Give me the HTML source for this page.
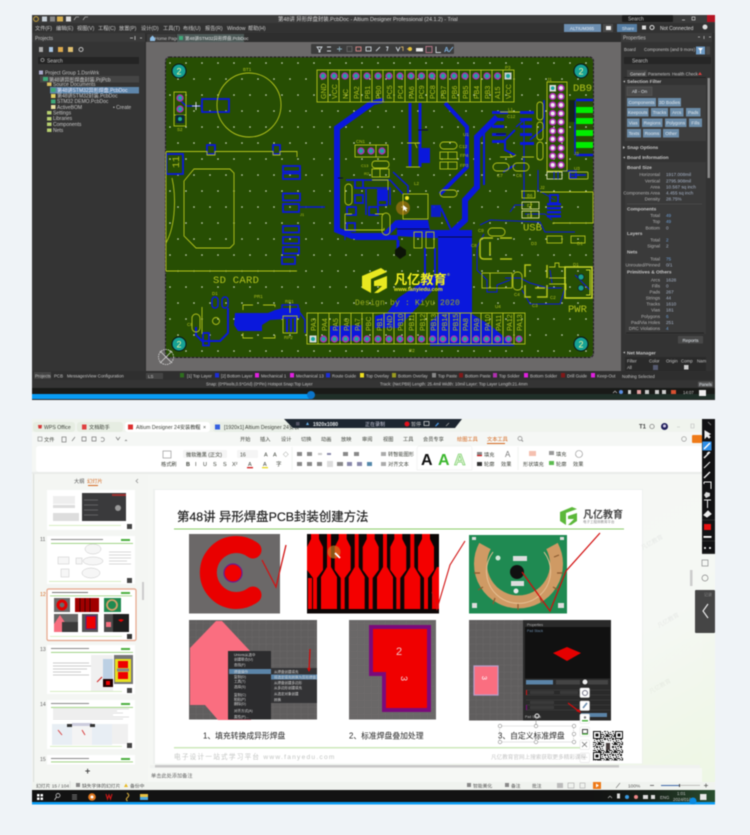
<!DOCTYPE html>
<html lang="zh"><head><meta charset="utf-8"><title>PCB</title>
<style>
html,body{margin:0;padding:0;background:#eff3f7;width:750px;height:835px;overflow:hidden}
svg{position:absolute;left:0;top:0;filter:blur(.45px)}
text{font-family:"Liberation Sans","Noto Sans CJK SC",sans-serif}
.w{fill:#c6c6c6;font-size:5px}
.m{fill:#d0d0d0;font-size:5.2px}
.r{fill:#b4b4b4;font-size:4.6px;text-anchor:end}
.v{fill:#a8b4c8;font-size:4.6px}
.h{fill:#c8c8c8;font-size:4.8px;font-weight:bold}
.b{fill:#e2e8ee;font-size:4.6px;text-anchor:middle}
.y{fill:#b4c31e;font-family:"Liberation Mono",monospace}
.d{fill:#3c4038;font-size:5.2px}
.c{fill:#222;font-size:8.2px}
.g{fill:#c2c4c2;font-size:6.6px;letter-spacing:1.25px}
.l{fill:#4a4a4a;font-size:5px}
</style></head><body>
<svg width="750" height="835" viewBox="0 0 750 835" xmlns="http://www.w3.org/2000/svg">
<defs>
<pattern id="dots" x="216" y="61" width="16" height="32" patternUnits="userSpaceOnUse">
<circle cx="2" cy="2" r=".8" fill="#d4dcc4"/><circle cx="10" cy="18" r=".8" fill="#d4dcc4"/>
</pattern>
<pattern id="grid" width="7" height="7" patternUnits="userSpaceOnUse"><path d="M7,0H0V7" fill="none" stroke="#757474" stroke-width=".4"/></pattern>
<pattern id="qr" width="8" height="8" patternUnits="userSpaceOnUse"><rect width="8" height="8" fill="#fff"/>
<path d="M0,0h2v1h-2zM3,0h1v2h-1zM5,0h3v1h-3zM1,2h2v1h-2zM4,2h2v2h-2zM7,2h1v2h-1zM0,4h1v2h-1zM2,4h1v1h-1zM1,6h3v1h-3zM5,5h1v1h-1zM6,6h2v2h-2zM0,7h1v1h-1zM4,7h1v1h-1z" fill="#111"/></pattern>
<g id="p"><circle r="3.6" fill="#b02fb8"/><circle r="2.2" fill="#19a89c"/></g>
<g id="ps"><circle r="3.6" fill="#b02fb8"/><circle r="2" fill="#eee"/></g>
<g id="g"><circle r="3.4" fill="#123"/><circle r="2.6" fill="#17a08f"/></g>
<g id="tp"><polygon points="-4,534 4,534 4,539 8,547 8,570 2,578 2,609 -2,609 -2,578 -8,570 -8,547 -4,539" fill="#f40000"/></g>
<g id="bp"><polygon points="-2,534 2,534 2,567 8,577 8,609 -8,609 -8,577 -2,567" fill="#f40000"/></g>
</defs>

<rect width="750" height="835" fill="#eff3f7"/>

<!-- ========= TOP WINDOW ========= -->
<rect x="32" y="15" width="683" height="385" fill="#2e2e2e"/>
<rect x="32" y="15" width="683" height="8" fill="#3b3b3b"/>
<circle cx="36" cy="19" r="2.4" fill="none" stroke="#c9a23a" stroke-width="1"/>
<rect x="42" y="16.5" width="5" height="5" fill="#c8d0d8"/><rect x="50" y="16.5" width="5" height="5" fill="#888"/>
<rect x="57" y="16.5" width="6" height="5" fill="#d8b050"/><rect x="66" y="16.5" width="5" height="5" fill="#ddd"/>
<path d="M74,20l2,-3h3M83,20l2,-3h3" stroke="#aaa" stroke-width=".8" fill="none"/>
<text x="278" y="21" class="w" style="font-size:5.4px;fill:#d4d4d4">第48讲 异形焊盘封装.PcbDoc - Altium Designer Professional (24.1.2) - Trial</text>
<rect x="622" y="15" width="51" height="7" fill="#1d1d1d" rx="1"/><text x="628" y="20.5" class="w">Search</text>
<path d="M682,20h3M692,17h3v3h-3z" stroke="#ccc" stroke-width=".7" fill="none"/>
<rect x="707" y="15" width="8" height="7" fill="#b51423"/>

<rect x="32" y="23" width="683" height="10" fill="#323232"/>
<g class="m">
<text x="35" y="30">文件(F)</text><text x="56" y="30">编辑(E)</text><text x="77" y="30">视图(V)</text><text x="98" y="30">工程(C)</text><text x="119" y="30">放置(P)</text><text x="141" y="30">设计(D)</text><text x="163" y="30">工具(T)</text><text x="183" y="30">布线(U)</text><text x="205" y="30">报告(R)</text><text x="227" y="30">Window</text><text x="248" y="30">帮助(H)</text>
</g>
<rect x="564" y="24" width="37" height="8" fill="#6d8fb2"/><text x="582" y="30" class="b" style="fill:#e6edf4">ALTIUM365</text>
<rect x="603" y="24" width="10" height="8" fill="#4a4a4a"/><rect x="606" y="26" width="5" height="4" fill="#eee"/>
<rect x="617" y="24" width="20" height="8" fill="#557da3"/><text x="628" y="30" class="b">Share</text>
<rect x="642" y="25.5" width="4" height="4" fill="#ddd"/><circle cx="652" cy="27.5" r="2" fill="none" stroke="#ddd"/>
<text x="660" y="30" class="w" style="fill:#ddd">Not Connected</text><circle cx="705" cy="27" r="2.5" fill="#ddd"/>

<!-- left panel -->
<rect x="32" y="33" width="113" height="340" fill="#343434"/>
<rect x="32" y="33" width="113" height="9" fill="#3a3a3a"/>
<text x="35" y="40" class="w">Projects</text>
<path d="M130,38h3M135,36v4M140,38h2" stroke="#ccc" stroke-width=".8"/>
<rect x="39" y="47" width="4" height="5" fill="#aaa"/><rect x="49" y="47" width="4" height="5" fill="#a8c4e0"/><rect x="58" y="47" width="5" height="5" fill="#dca94c"/><rect x="68" y="47" width="5" height="5" fill="#e0c070"/><circle cx="81" cy="49.5" r="2" fill="none" stroke="#bbb"/>
<rect x="38" y="57" width="101" height="7" fill="#242424"/>
<text x="47" y="62.5" class="w">Search</text><circle cx="42.5" cy="60" r="1.6" fill="none" stroke="#bbb" stroke-width=".6"/>
<rect x="40" y="76" width="99" height="6.5" fill="#454545"/>
<rect x="50" y="87" width="89" height="6.5" fill="#5e86ab"/>
<rect x="39" y="70.5" width="4" height="4" fill="#aac"/><text x="45" y="74.5" class="w">Project Group 1.DsnWrk</text>
<rect x="43" y="77" width="5" height="4" fill="#3fa878"/><text x="49" y="81.3" class="w">第48讲异形焊盘封装.PrjPcb</text>
<rect x="47" y="82.5" width="4.5" height="3.5" fill="#d8c060"/><text x="53" y="86" class="w">Source Documents</text>
<rect x="51" y="88" width="4.5" height="4" fill="#3fa878"/><text x="57" y="92" class="w" style="fill:#eef">第48讲STM32异形焊盘.PcbDoc</text>
<rect x="51" y="94" width="4.5" height="4" fill="#e0d060"/><text x="57" y="97.5" class="w">第48讲STM32封装.PcbDoc</text>
<rect x="51" y="99.5" width="4.5" height="4" fill="#3fa878"/><text x="57" y="103" class="w">STM32 DEMO.PcbDoc</text>
<rect x="51" y="105" width="4.5" height="4" fill="#e8e0a0"/><text x="57" y="109" class="w">ActiveBOM</text><text x="113" y="109" class="w">• Create</text>
<rect x="47" y="111" width="4.5" height="3.5" fill="#b8d070"/><text x="53" y="114.5" class="w">Settings</text>
<rect x="47" y="117" width="4.5" height="3.5" fill="#b8d070"/><text x="53" y="120" class="w">Libraries</text>
<rect x="47" y="122.5" width="4.5" height="3.5" fill="#b8d070"/><text x="53" y="126" class="w">Components</text>
<rect x="47" y="128.5" width="4.5" height="3.5" fill="#b8d070"/><text x="53" y="132" class="w">Nets</text>
<rect x="32" y="368" width="113" height="5" fill="#343434"/>

<!-- tabs -->
<rect x="145" y="33" width="476" height="9" fill="#2e2e2e"/>
<rect x="147" y="34" width="29" height="8" fill="#3b3b3b"/><path d="M150,38l2.5,-2.5l2.5,2.5v3h-5z" fill="#8fc0e8"/><text x="155" y="40" class="w" style="font-size:4.5px">Home Page</text>
<rect x="177" y="34" width="67" height="8" fill="#4d5a58"/><rect x="179" y="36" width="4" height="4" fill="#3fa878"/><text x="185" y="40" class="w" style="font-size:4.5px;fill:#e6e6e6">第48讲STM32异形焊盘.PcbDoc</text>

<!-- canvas -->
<rect x="146" y="42" width="475" height="330" fill="#6b6969"/>
<rect x="311" y="44" width="143" height="10" fill="#3c3c3c" rx="1"/>
<g fill="none" stroke="#cfd6dc" stroke-width=".9">
<path d="M317,47h5l-2,3v2h-1v-2zM327,47h4M327,51h4"/><path d="M337,49h5M339.5,46.500v5" stroke="#8ab"/><rect x="347" y="46.500" width="5" height="5" stroke="#666"/><rect x="356" y="47" width="5" height="4" stroke="#d88"/>
<rect x="366" y="47" width="5" height="4"/><path d="M376,51l4,-4M386,47h2l-1,4M396,47l2,4l2,-4"/><path d="M401,47h2v4M407,49h5" stroke="#ca6"/>
<circle cx="410" cy="49" r="2" fill="#e6c33a" stroke="none"/><rect x="416" y="48" width="7" height="3.500" fill="#e8e8e8" stroke="none"/><rect x="426" y="46.500" width="6" height="6" stroke="#b78"/><path d="M436,46.500v6h5"/>
</g>
<text x="444" y="52" style="font-size:7px;fill:#7fb2e0;font-weight:bold">A</text><path d="M449,52l4,-5" stroke="#7fb2e0"/>

<!-- ==== PCB ==== -->
<rect x="166" y="57.500" width="427" height="299.500" rx="4" fill="#274e03"/>
<rect x="166" y="57.500" width="427" height="299.500" fill="url(#dots)"/>
<rect x="165.500" y="57" width="428" height="300.500" rx="4" fill="none" stroke="#241c28" stroke-width="1" stroke-dasharray="3 1"/>

<!-- blue copper fills -->
<g fill="#0a18dc" stroke="none">
<polygon points="397,220 428,220 430,230 472,230 472,314 490,325 515,346 430,346 430,322 438,315 438,238 428,238 397,236"/>
<polygon points="423,275 435,275 435,288 412,313 398,328 375,328 375,316 387,313 398,298 422,282"/>
<polygon points="330,326 362,325 362,341 330,341"/>
<polygon points="235,313 268,313 275,310 283,308 300,308 300,318 270,320 262,325 262,331 238,331 234,325"/>
<rect x="355" y="235" width="43" height="5"/>
<rect x="378" y="190" width="10" height="11"/>
<rect x="431" y="205" width="10" height="12" opacity=".9"/>
<polygon points="420,148 430,148 430,163 420,163"/>
</g>
<g fill="none" stroke="#0a18dc">
<rect x="212" y="297" width="6" height="11" rx="3" stroke-width="1.500"/>
<rect x="222" y="297" width="6" height="11" rx="3" stroke-width="1.500"/>
<path d="M372,103L337,128V230L352,236H384L398,222" stroke-width="6"/>
<path d="M384,100L372,103" stroke-width="5"/>
<path d="M410,103V167M420,103V167" stroke-width="3"/>
<path d="M445,103L467,127V167L440,194" stroke-width="4"/>
<path d="M497,117L477,137V187L465,200L465,220L452,232" stroke-width="6"/>
<path d="M490,125L484,130V185" stroke-width="2"/>
<path d="M360,188H390V205M366,189V215M393,172L408,186V194" stroke-width="1.500"/>
<path d="M346,180H390L403,194" stroke-width="1.500"/>
<path d="M345,240V220" stroke-width="1.200"/>
<path d="M201,106H186L178,98" stroke-width="1.500"/>
<path d="M196,327V335L202,341L220,341L228,333V308" stroke-width="2"/>
<path d="M299,207H325" stroke-width="1.500"/>
<path d="M515,130L505,140V150L515,155M515,165L503,172" stroke-width="2"/>
<path d="M516,127L524,120V200" stroke-width="1.200"/>
<path d="M530,140L544,128V100" stroke-width="1.500"/>
<path d="M538,170V190L555,200" stroke-width="1"/>
<path d="M576,100H593M576,155H593" stroke-width="2.500"/>
<path d="M575,101V155" stroke-width="1.500"/>
<path d="M563,171H577M571,175H586" stroke-width="1.500"/>
<path d="M484,234L477,247V270L487,280V292H497V285L510,280" stroke-width="1"/>
<path d="M480,225L490,220L540,222L545,232L575,232" stroke-width="1"/>
<path d="M505,278H520L530,283L548,288L562,288" stroke-width="1"/>
<path d="M522,290L530,304H560L565,288" stroke-width="1"/>
<path d="M550,270L552,283M575,275L590,290" stroke-width="1"/>
<path d="M525,214H545L552,220" stroke-width="1"/>
<path d="M510,212L515,205H524" stroke-width="1"/>
<path d="M441,208L452,232" stroke-width="2"/>
<path d="M298,310L305,320V333" stroke-width="1.500"/>
<path d="M425,248V282M435,248V282" stroke-width="2"/>
<path d="M398,240V254" stroke-width="3"/>
</g>
<g fill="none" stroke="#0a18dc" stroke-width="1.800">
<rect x="202" y="99" width="27" height="13"/>
<rect x="166.500" y="154" width="16.500" height="20"/>
<rect x="283" y="166" width="17" height="5.500"/><rect x="283" y="173.500" width="17" height="5.500"/><rect x="283" y="193.500" width="17" height="7"/>
<rect x="283" y="204" width="16" height="8"/><rect x="283" y="226" width="16" height="6.500"/><rect x="283" y="237" width="16" height="6.500"/><rect x="283" y="247" width="16" height="6.500"/><rect x="282" y="257" width="13" height="7"/>
<rect x="207" y="145" width="8" height="9"/><rect x="273" y="145" width="7" height="9"/>
<rect x="203" y="333" width="6" height="12.500"/>
<rect x="355" y="180" width="8" height="8"/><rect x="355" y="195" width="8" height="8"/>
<rect x="347" y="207" width="9" height="8"/><rect x="369" y="207" width="9" height="8"/><rect x="347" y="223" width="8" height="8"/>
<rect x="378" y="190" width="9" height="8"/><rect x="378" y="197" width="9" height="8"/>
<rect x="550" y="195" width="8" height="8"/>
<rect x="570" y="172" width="6" height="6"/>
</g>
<g fill="#0a18dc">
<rect x="547" y="203" width="14" height="2.500"/><rect x="547" y="207" width="14" height="2.500"/><rect x="547" y="211" width="14" height="2.500"/><rect x="547" y="215" width="14" height="2.500"/>
<rect x="492" y="111" width="16" height="3"/><rect x="492" y="118" width="12" height="3"/><rect x="492" y="125" width="12" height="3"/><rect x="492" y="133" width="14" height="3"/><rect x="492" y="140" width="12" height="3"/>
<rect x="520" y="111" width="14" height="3"/><rect x="520" y="118" width="12" height="3"/><rect x="520" y="125" width="12" height="3"/><rect x="520" y="133" width="12" height="3"/><rect x="520" y="142" width="14" height="3"/>
</g>
<path d="M438,237H472M397,229H429M338,178H343M496,134H506M418,130H428" stroke="#0a0a40" stroke-width="1"/>
<polygon points="395,250 400,246 406,250 406,255 400,259 395,255" fill="#0d1408"/>

<!-- silk -->
<g fill="none" stroke="#b4c31c" stroke-width=".9">
<circle cx="249" cy="105" r="32"/>
<rect x="174" y="92" width="12" height="34"/><path d="M174,115H186"/>
<path d="M166,151.500H207V155H215V151.500H273V155H280V151.500H297V157"/>
<path d="M166,151.500V271H297"/>
<path d="M172,178C176,195 176,225 166,243"/>
<path d="M184,181L194,169H230L234,173V244L230,248H196L184,236Z"/>
<rect x="317" y="70" width="197" height="32"/>
<path d="M328,70V102M339,70V102M350,70V102M361,70V102M372,70V102M383,70V102M394,70V102M405,70V102M416,70V102M427,70V102M437,70V102M448,70V102M459,70V102M470,70V102M481,70V102M492,70V102M503,70V102"/>
<rect x="307" y="313" width="218" height="31"/>
<path d="M318,313V344M329,313V344M340,313V344M351,313V344M362,313V344M373,313V344M384,313V344M394,313V344M405,313V344M416,313V344M427,313V344M438,313V344M449,313V344M460,313V344M471,313V344M481,313V344M492,313V344M503,313V344M514,313V344"/>
<rect x="547" y="82" width="20" height="89"/>
<rect x="403" y="194" width="25" height="25"/>
<rect x="355" y="145" width="33" height="12"/><path d="M376,145V157"/>
<rect x="372" y="161" width="17" height="7" rx="3"/>
<rect x="372" y="169" width="17" height="8"/><path d="M380,169V177"/>
<rect x="345" y="184" width="7" height="21" rx="3.500"/>
<rect x="382" y="213" width="8" height="22" rx="4"/>
<path d="M345,214V230H384V228M345,214H352M375,214H384M372,180H388V190"/>
<path d="M407,143H420M406,167H420M415,143L417,148"/>
<rect x="440" y="142" width="17" height="7" rx="3.500"/>
<rect x="440" y="152" width="17" height="7"/><path d="M448,152V159"/>
<rect x="440" y="162" width="17" height="7"/><path d="M448,162V169"/>
<rect x="440" y="190" width="17" height="7" rx="3.500"/>
<rect x="414" y="232" width="8" height="16"/><rect x="426" y="232" width="8" height="16"/>
<rect x="537" y="102" width="6" height="18" rx="3"/><rect x="537" y="122" width="6" height="18" rx="3"/><rect x="537" y="142" width="6" height="18" rx="3"/>
<rect x="493" y="163" width="16" height="8" rx="4"/><rect x="513" y="163" width="16" height="8" rx="4"/>
<rect x="522" y="191" width="13" height="7"/>
<rect x="522" y="202" width="17" height="7"/><path d="M531,202V209"/>
<rect x="522" y="211" width="17" height="7"/><path d="M531,211V218"/>
<path d="M540,192H593V223H553V224"/>
<path d="M500,112H520"/>
<path d="M500,157H512M516,155L512,157L510,154M522,157H534"/>
<rect x="488" y="228" width="17" height="8" rx="4"/>
<path d="M493,238H484Q480,238 480,242V255Q480,259 484,259H492M500,238H512M500,259H512M490,242V255" stroke-width="1.500"/>
<rect x="482" y="273" width="30" height="15"/><path d="M490,273V288"/>
<rect x="513" y="272" width="9" height="18" rx="4"/>
<path d="M525,277V265H531M547,265V278M525,285V297H531M547,285V297H537M535,288H545" stroke-width="1.500"/>
<path d="M549,267H555V263H559V267H566M549,284H566V290M549,278H566"/>
<rect x="547" y="236" width="15" height="7"/><rect x="571" y="236" width="14" height="7"/>
<path d="M202,307V334"/>
<rect x="192" y="314" width="8" height="18" rx="4"/>
<circle cx="216" cy="321" r="3.500"/>
<path d="M253,305H243V310M253,338H243V333M263,305H275V307M263,338H275V335"/>
<rect x="283" y="316" width="14" height="17"/>
</g>
<rect x="282" y="305" width="16" height="8" fill="none" stroke="#0a18dc" stroke-width="1.500"/>
<path d="M290,305V313" stroke="#bccb1d"/>
<path d="M287,318V332M291,318V332M295,318V332" stroke="#0a18dc" stroke-width="2"/>
<rect x="565" y="267" width="27" height="31" fill="none" stroke="#c8d62a" stroke-width="1.500"/>
<path d="M586,270H590V295H586" fill="none" stroke="#c8d62a"/>
<rect x="522" y="202" width="17" height="7" fill="none" stroke="#c9d080"/><rect x="522" y="211" width="17" height="7" fill="none" stroke="#c9d080"/>
<rect x="547" y="172" width="15" height="7" fill="none" stroke="#c9d0a0"/><path d="M554,172V179M558,172V179" stroke="#0a18dc"/>
<rect x="569" y="172" width="19" height="7" rx="1" fill="none" stroke="#a8b830"/>
<!-- green fingers -->
<g fill="#00ee00"><rect x="576" y="107" width="17" height="6"/><rect x="576" y="118" width="17" height="6"/><rect x="576" y="130" width="17" height="6"/><rect x="576" y="142" width="17" height="6"/></g>
<rect x="569" y="100" width="6" height="22" fill="#0a0a20" opacity=".6"/>
<!-- pads -->
<circle cx="180" cy="98" r="3.800" fill="#3a6a18"/><use href="#p" x="180" y="98"/>
<use href="#p" x="180" y="109"/>
<rect x="176.500" y="115.500" width="7" height="7" fill="#07302a" stroke="#0c1a50"/><circle cx="180" cy="119" r="2" fill="#19a89c"/>
<use href="#p" x="323" y="76"/><use href="#p" x="334" y="76"/><use href="#p" x="345" y="76"/><use href="#p" x="356" y="76"/><use href="#p" x="367" y="76"/><use href="#p" x="378" y="76"/><use href="#p" x="389" y="76"/><use href="#p" x="400" y="76"/><use href="#p" x="411" y="76"/><use href="#p" x="421.500" y="76"/><use href="#p" x="432" y="76"/><use href="#p" x="443" y="76"/><use href="#p" x="454" y="76"/><use href="#p" x="465" y="76"/><use href="#p" x="476" y="76"/><use href="#p" x="487" y="76"/><use href="#p" x="497.500" y="76"/>
<rect x="504.500" y="72.500" width="7" height="7" fill="#c9ced0"/><circle cx="508" cy="76" r="2" fill="#19a89c"/>
<rect x="309.500" y="335.500" width="7" height="7" fill="#d8dcd8"/><circle cx="313" cy="339" r="2" fill="#19a89c"/>
<use href="#p" x="323.500" y="339"/><use href="#p" x="334.500" y="339"/><use href="#p" x="345.500" y="339"/><use href="#p" x="356.500" y="339"/><use href="#p" x="367" y="339"/><use href="#p" x="378" y="339"/><use href="#p" x="389" y="339"/><use href="#p" x="400" y="339"/><use href="#p" x="410.500" y="339"/><use href="#p" x="421.500" y="339"/><use href="#p" x="432.500" y="339"/><use href="#p" x="443" y="339"/><use href="#p" x="454" y="339"/><use href="#p" x="465" y="339"/><use href="#p" x="476" y="339"/><use href="#p" x="486.500" y="339"/><use href="#p" x="497.500" y="339"/><use href="#p" x="508.500" y="339"/><use href="#p" x="519" y="339"/>
<rect x="549.500" y="85" width="6.500" height="6.500" fill="#ddd"/><circle cx="552.700" cy="88.200" r="1.800" fill="#19a89c"/>
<use href="#ps" x="561" y="88"/>
<use href="#ps" x="552.700" y="96.500"/><use href="#ps" x="561" y="96.500"/><use href="#ps" x="552.700" y="105"/><use href="#ps" x="561" y="105"/><use href="#ps" x="552.700" y="113.500"/><use href="#ps" x="561" y="113.500"/><use href="#ps" x="552.700" y="122"/><use href="#ps" x="561" y="122"/><use href="#ps" x="552.700" y="131"/><use href="#ps" x="561" y="131"/><use href="#ps" x="552.700" y="139"/><use href="#ps" x="561" y="139"/><use href="#ps" x="552.700" y="148"/><use href="#ps" x="561" y="148"/><use href="#ps" x="552.700" y="156"/><use href="#ps" x="561" y="156"/><use href="#ps" x="552.700" y="165"/><use href="#ps" x="561" y="165"/>
<use href="#p" x="361" y="151"/><use href="#p" x="371" y="151"/><use href="#p" x="382" y="151"/>
<use href="#g" x="581" y="277"/><use href="#g" x="581" y="288"/>
<circle cx="407" cy="198" r="2" fill="#f0e020"/>
<circle cx="403" cy="208" r="7" fill="#c8801a" opacity=".55"/>
<path d="M403,205l0,6l1.500,-1.500l1.500,2l1,-.5l-1.200,-2l2,-.3z" fill="#fff"/>
<!-- corner markers -->
<g fill="#16a294" stroke="#09131a" stroke-width="1">
<circle cx="179" cy="71" r="7"/><circle cx="581" cy="71" r="7"/><circle cx="179" cy="344" r="7"/><circle cx="581" cy="344" r="7"/></g>
<g fill="#f2f2a0" text-anchor="middle" style="font-size:9px">
<text x="179" y="74.500">2</text><text x="581" y="74.500">2</text><text x="179" y="347.500">2</text><text x="581" y="347.500">2</text></g>
<!-- white cross -->
<path d="M192,106H200M196,102V110" stroke="#fff" stroke-width=".8"/>
<!-- silk text -->
<g class="y" style="font-size:4.500px">
<text x="243" y="71">BT1</text><text x="177" y="131">S2</text><text x="505" y="69">P3</text><text x="356" y="143">CN1</text><text x="361" y="167" style="font-size:4px">C13</text><text x="364" y="175" style="font-size:4px">R2</text>
<text x="463" y="136">U1</text><text x="547" y="81">J1</text><text x="414" y="185">L2</text>
<text x="508" y="111">L1</text><text x="507" y="118">C12</text><text x="459" y="148">C12</text><text x="460" y="157">FP4</text><text x="460" y="167">FP3</text>
<text x="497" y="177">C7</text><text x="516" y="177">C6</text><text x="527" y="197">B6</text><text x="540" y="189">J2</text><text x="527" y="207">E7</text><text x="527" y="217">E4</text>
<text x="574" y="155">J3</text><text x="574" y="170">U3</text>
<text x="531" y="245">D3</text><text x="577" y="245">D1</text><text x="471" y="247">C8</text><text x="478" y="232">C9</text><text x="514" y="296">C4</text><text x="550" y="299">C2</text><text x="532" y="307">C3</text><text x="495" y="308">U4</text>
<text x="573" y="266">D1</text>
<text x="254" y="298">PR1</text><text x="285" y="303">RP1</text><text x="284" y="339">RP2</text><text x="212" y="295">D1</text><text x="187" y="326">C8</text><text x="300" y="216" style="font-size:4px">J1</text>
<text x="409" y="352">R2</text>
</g>
<text x="213" y="283" class="y" style="font-size:10.500px;letter-spacing:.3px">SD CARD</text>
<text x="573" y="91" class="y" style="font-size:10.500px;letter-spacing:.1px">DB9</text>
<text x="523" y="230.500" class="y" style="font-size:10.500px">USB</text>
<text x="568" y="312" class="y" style="font-size:10.500px">PWR</text>
<text class="y" style="font-size:10px" transform="translate(179,168) rotate(-90)">11</text>
<text class="y" style="font-size:8px;fill:#9aad20;letter-spacing:.2px" x="355" y="305">Design by : Kiyu 2020</text>
<g class="y" style="font-size:7px">
<text transform="translate(326,99) rotate(-90)">GND</text><text transform="translate(337,99) rotate(-90)">VCC</text><text transform="translate(348,99) rotate(-90)">NC</text><text transform="translate(359,99) rotate(-90)">PA2</text><text transform="translate(370,99) rotate(-90)">PB1</text><text transform="translate(381,99) rotate(-90)">PB0</text><text transform="translate(392,99) rotate(-90)">PC5</text><text transform="translate(403,99) rotate(-90)">PC4</text><text transform="translate(414,99) rotate(-90)">PA6</text><text transform="translate(424,99) rotate(-90)">PC9</text><text transform="translate(435,99) rotate(-90)">PC8</text><text transform="translate(446,99) rotate(-90)">PB7</text><text transform="translate(457,99) rotate(-90)">PB6</text><text transform="translate(468,99) rotate(-90)">PB5</text><text transform="translate(479,99) rotate(-90)">PB4</text><text transform="translate(490,99) rotate(-90)">PB3</text><text transform="translate(500,99) rotate(-90)">A15</text><text transform="translate(511,99) rotate(-90)">VCC</text>
<text transform="translate(316,331) rotate(-90)">PA3</text><text transform="translate(327,331) rotate(-90)">PA4</text><text transform="translate(338,331) rotate(-90)">PA5</text><text transform="translate(349,331) rotate(-90)">PA6</text><text transform="translate(360,331) rotate(-90)">PA7</text><text transform="translate(371,331) rotate(-90)">PBC</text><text transform="translate(382,331) rotate(-90)">PB1</text><text transform="translate(392,331) rotate(-90)">GND</text><text transform="translate(403,331) rotate(-90)">PB10</text><text transform="translate(414,331) rotate(-90)">PB11</text><text transform="translate(425,331) rotate(-90)">PB12</text><text transform="translate(436,331) rotate(-90)">PB13</text><text transform="translate(447,331) rotate(-90)">PB14</text><text transform="translate(458,331) rotate(-90)">PB15</text><text transform="translate(468,331) rotate(-90)">PA8</text><text transform="translate(479,331) rotate(-90)">PA9</text><text transform="translate(490,331) rotate(-90)">PA10</text><text transform="translate(501,331) rotate(-90)">PA11</text><text transform="translate(512,331) rotate(-90)">PA12</text><text transform="translate(522,331) rotate(-90)">PA13</text>
</g>
<!-- logo on board -->
<polygon points="362,276 381,268 387,272 371,279 371,293 362,288" fill="#e8e820"/>
<polygon points="374,281 387,276 387,288 378,293 374,293 382,286 374,286" fill="#e8e820"/>
<text x="394" y="284" style="font-size:13.200px;font-weight:bold;fill:#f2f020">凡亿教育</text>
<text x="394" y="291" style="font-size:5.400px;font-weight:bold;fill:#e8e820">www.fanyiedu.com</text>
<text x="447" y="276" style="font-size:4px;fill:#e8e820">®</text>
<!-- origin marker -->
<circle cx="166" cy="357" r="7.500" fill="none" stroke="#d8d8d8" stroke-width=".8" stroke-dasharray="1.500 .8"/><path d="M160,363L172,351M160,351L172,363" stroke="#d8d8d8" stroke-width=".8"/>

<!-- layer tabs -->
<rect x="145" y="371" width="476" height="9" fill="#2f2f2f"/>
<rect x="32" y="371" width="113" height="9" fill="#2f2f2f"/>
<rect x="34" y="372" width="17" height="7" fill="#444"/>
<text x="35" y="377.500" class="w" style="font-size:4.400px">Projects</text><text x="54" y="377.500" class="w" style="font-size:4.400px">PCB</text><text x="67" y="377.500" class="w" style="font-size:4.400px">Messages</text><text x="87" y="377.500" class="w" style="font-size:4.400px">View Configuration</text>
<rect x="146" y="373" width="17" height="6" fill="#444"/><text x="148" y="378" class="w" style="font-size:4.400px">LS</text>
<g class="w" style="font-size:4.300px">
<rect x="180" y="373" width="4" height="4.500" fill="#2e6e1e"/><text x="187" y="377.500">[1] Top Layer</text>
<rect x="215" y="373" width="4" height="4.500" fill="#1b2cd8"/><text x="221" y="377.500">[2] Bottom Layer</text>
<rect x="255" y="373" width="4" height="4.500" fill="#e020e0"/><text x="261" y="377.500">Mechanical 1</text>
<rect x="290" y="373" width="4" height="4.500" fill="#e020e0"/><text x="296" y="377.500">Mechanical 13</text>
<rect x="326" y="373" width="4" height="4.500" fill="#1b2cd8"/><text x="332" y="377.500">Route Guide</text>
<rect x="360" y="373" width="4" height="4.500" fill="#f0e020"/><text x="366" y="377.500">Top Overlay</text>
<rect x="392" y="373" width="4" height="4.500" fill="#9a9a20"/><text x="398" y="377.500">Bottom Overlay</text>
<rect x="432" y="373" width="4" height="4.500" fill="#888"/><text x="438" y="377.500">Top Paste</text>
<rect x="459" y="373" width="4" height="4.500" fill="#801818"/><text x="465" y="377.500">Bottom Paste</text>
<rect x="493" y="373" width="4" height="4.500" fill="#b030b0"/><text x="499" y="377.500">Top Solder</text>
<rect x="524" y="373" width="4" height="4.500" fill="#e020e0"/><text x="530" y="377.500">Bottom Solder</text>
<rect x="561" y="373" width="4" height="4.500" fill="#801818"/><text x="567" y="377.500">Drill Guide</text>
<rect x="591" y="373" width="4" height="4.500" fill="#e020e0"/><text x="597" y="377.500">Keep-Out</text>
</g>
<!-- status -->
<rect x="32" y="380" width="683" height="8" fill="#343434"/>
<text x="206" y="385.500" class="w" style="font-size:4.200px">Snap: (0*Pixels,0.5*Grid) (0*Pin) Hotspot Snap:Top Layer</text>
<text x="380" y="385.500" class="w" style="font-size:4.200px">Track: (Net:PB9) Length: 25.4mil Width: 10mil  Layer: Top Layer  Length:21.4mm</text>
<rect x="698" y="381.500" width="15" height="5.500" fill="#555" rx="1"/><text x="705.500" y="386" class="b" style="font-size:4.200px">Panels</text>
<!-- taskbar -->
<rect x="32" y="388" width="683" height="6" fill="#191a18"/>
<rect x="32" y="394" width="280" height="5" fill="#089cf5"/>
<rect x="312" y="394" width="403" height="5" fill="#1f2f28"/>
<circle cx="311" cy="395" r="4" fill="#0b74c9"/>
<g fill="#ccc"><path d="M613,393l2,-2l2,2" fill="none" stroke="#ccc" stroke-width=".6"/><circle cx="621" cy="392" r="2" fill="#5a8ee0"/><rect x="628" y="390" width="3" height="4"/><rect x="637" y="390" width="4" height="4" fill="#e4a0a0"/><rect x="645" y="390" width="4" height="4"/><rect x="655" y="390" width="4" height="4"/><rect x="662" y="390" width="4" height="4"/><rect x="671" y="390" width="5" height="4" fill="#d85030"/><rect x="699" y="390" width="7" height="6" fill="#eee"/></g>
<text x="683" y="394" class="w" style="font-size:4.300px">14:07</text>

<!-- right panel -->
<rect x="621" y="33" width="91" height="338" fill="#333"/>
<rect x="621" y="33" width="91" height="9" fill="#3b3b3b"/>
<text x="623" y="39.500" class="w">Properties</text><path d="M698,37h2M704,36v3M709,37h2" stroke="#ccc" stroke-width=".7"/>
<text x="624" y="51" class="w" style="font-size:4.400px">Board</text><text x="644" y="51" class="w" style="font-size:4.400px">Components (and 9 more)</text>
<rect x="696" y="46.500" width="9" height="8" fill="#6d9ac4"/><path d="M698,48h5l-2,2.500v3h-1v-3z" fill="#fff"/><rect x="706" y="46.500" width="4" height="8" fill="#484848"/>
<rect x="624" y="57" width="87" height="7" fill="#262626"/><text x="632" y="62.500" class="w">Search</text>
<rect x="627" y="70" width="20" height="7" fill="#444"/>
<text x="630" y="75.500" class="w" style="fill:#e0e0e0;font-size:4.300px">General</text><text x="648" y="75.500" class="w" style="font-size:4.300px">Parameters</text><text x="672" y="75.500" class="w" style="font-size:4.300px">Health Check</text><path d="M698,75l2,-3l2,3z" fill="#d84040"/>
<path d="M624,77.500H706" stroke="#222"/>
<text x="627" y="83" class="h">Selection Filter</text><path d="M623,81.500l2,-1v2z" fill="#ccc"/>
<rect x="625" y="85" width="81" height="56" fill="#3d3d3d"/>
<rect x="627" y="87" width="25" height="8.500" fill="#4a4a4a" stroke="#666" stroke-width=".4"/><text x="639.500" y="93" class="b">All - On</text>
<g fill="#6c8ca8">
<rect x="627" y="98" width="29" height="8.500"/><rect x="658" y="98" width="23" height="8.500"/>
<rect x="627" y="108" width="21.500" height="8.500"/><rect x="651" y="108" width="17" height="8.500"/><rect x="670" y="108" width="13.500" height="8.500"/><rect x="686" y="108" width="14.500" height="8.500"/>
<rect x="627" y="118.500" width="12.500" height="8.500"/><rect x="642" y="118.500" width="20.500" height="8.500"/><rect x="665" y="118.500" width="21.500" height="8.500"/><rect x="689" y="118.500" width="13" height="8.500"/>
<rect x="627" y="129" width="14" height="8.500"/><rect x="643" y="129" width="18" height="8.500"/><rect x="663" y="129" width="16" height="8.500"/>
</g>
<text x="641.500" y="104" class="b">Components</text><text x="669.500" y="104" class="b">3D Bodies</text>
<text x="637.700" y="114" class="b">Keepouts</text><text x="659.500" y="114" class="b">Tracks</text><text x="676.700" y="114" class="b">Arcs</text><text x="693.200" y="114" class="b">Pads</text>
<text x="633.200" y="124.700" class="b">Vias</text><text x="652.200" y="124.700" class="b">Regions</text><text x="675.700" y="124.700" class="b">Polygons</text><text x="695.500" y="124.700" class="b">Fills</text>
<text x="634" y="135" class="b">Texts</text><text x="652" y="135" class="b">Rooms</text><text x="671" y="135" class="b">Other</text>
<text x="627" y="149" class="h">Snap Options</text><path d="M623,146l2,1.500l-2,1.500z" fill="#ccc"/>
<text x="627" y="159" class="h">Board Information</text><path d="M623,157.500l2,-1v2z" fill="#ccc"/>
<rect x="625" y="162" width="81" height="172" fill="#3a3a3a"/>
<text x="627" y="169" class="h">Board Size</text>
<text x="660" y="176" class="r">Horizontal</text><text x="666" y="176" class="v">1917.008mil</text>
<text x="660" y="182.500" class="r">Vertical</text><text x="666" y="182.500" class="v">2795.908mil</text>
<text x="660" y="188.500" class="r">Area</text><text x="666" y="188.500" class="v">10.567 sq inch</text>
<text x="660" y="194.500" class="r">Components Area</text><text x="666" y="194.500" class="v">4.455 sq inch</text>
<text x="660" y="200.500" class="r">Density</text><text x="666" y="200.500" class="v">28.75%</text>
<path d="M627,204H702" stroke="#555" stroke-width=".5"/>
<text x="627" y="210.500" class="h">Components</text>
<text x="660" y="217" class="r">Total</text><text x="666" y="217" class="v" style="fill:#6ea0d8">49</text>
<text x="660" y="223" class="r">Top</text><text x="666" y="223" class="v" style="fill:#6ea0d8">49</text>
<text x="660" y="229.500" class="r">Bottom</text><text x="666" y="229.500" class="v">0</text>
<text x="627" y="235" class="h">Layers</text>
<text x="660" y="241.500" class="r">Total</text><text x="666" y="241.500" class="v" style="fill:#6ea0d8">2</text>
<text x="660" y="247.500" class="r">Signal</text><text x="666" y="247.500" class="v">2</text>
<text x="627" y="253.500" class="h">Nets</text>
<text x="660" y="260.500" class="r">Total</text><text x="666" y="260.500" class="v" style="fill:#6ea0d8">75</text>
<text x="660" y="266.500" class="r">Unrouted/Pinned</text><text x="666" y="266.500" class="v">0/1</text>
<text x="627" y="273.500" class="h">Primitives &amp; Others</text>
<text x="660" y="281.500" class="r">Arcs</text><text x="666" y="281.500" class="v">1628</text>
<text x="660" y="287.500" class="r">Fills</text><text x="666" y="287.500" class="v">0</text>
<text x="660" y="293.500" class="r">Pads</text><text x="666" y="293.500" class="v">267</text>
<text x="660" y="299.500" class="r">Strings</text><text x="666" y="299.500" class="v">44</text>
<text x="660" y="305.500" class="r">Tracks</text><text x="666" y="305.500" class="v">1610</text>
<text x="660" y="311.500" class="r">Vias</text><text x="666" y="311.500" class="v">181</text>
<text x="660" y="318" class="r">Polygons</text><text x="666" y="318" class="v" style="fill:#6ea0d8">6</text>
<text x="660" y="324" class="r">Pad/Via Holes</text><text x="666" y="324" class="v">251</text>
<text x="660" y="330" class="r">DRC Violations</text><text x="666" y="330" class="v" style="fill:#6ea0d8">4</text>
<path d="M626,333H704" stroke="#222"/>
<rect x="678" y="336" width="25" height="7.500" fill="#484848"/><text x="690.500" y="342" class="b">Reports</text>
<text x="627" y="354.500" class="h">Net Manager</text><path d="M623,352.500l2,-1v2z" fill="#ccc"/>
<rect x="625" y="357" width="81" height="14" fill="#2a2a2a"/>
<text x="627" y="362.500" class="w" style="font-size:4.400px">Filter</text><text x="649" y="362.500" class="w" style="font-size:4.400px">Color</text><text x="666" y="362.500" class="w" style="font-size:4.400px">Origin</text><text x="681" y="362.500" class="w" style="font-size:4.400px">Comp</text><text x="697" y="362.500" class="w" style="font-size:4.400px">Nam</text>
<text x="627" y="369" class="w" style="font-size:4.400px">All</text><rect x="653" y="365" width="5" height="5" fill="#555a70"/><rect x="684" y="365" width="4.500" height="4.500" fill="#ccc"/>
<rect x="707.500" y="78" width="2.500" height="100" fill="#8a8a8a"/>
<text x="622" y="378" class="w" style="font-size:4.300px">Nothing Selected</text>

<!-- ========= BOTTOM WINDOW ========= -->
<defs><linearGradient id="gr" x1="0" y1="0" x2="1" y2="1"><stop offset="0" stop-color="#f5f7f4"/><stop offset=".7" stop-color="#f5f8f4"/><stop offset="1" stop-color="#eef7e4"/></linearGradient></defs>
<rect x="32" y="419" width="683" height="371" fill="url(#gr)"/>
<rect x="32" y="419" width="683" height="13" fill="#f0f4ee"/>
<rect x="33" y="422" width="42" height="10" rx="3" fill="#e6ede2"/><rect x="77" y="422" width="46" height="10" rx="3" fill="#e6ede2"/><rect x="125" y="422" width="85" height="10" rx="3" fill="#fff"/><rect x="213" y="422" width="80" height="10" rx="3" fill="#e8eee6"/>
<path d="M38,425h4l-.5,3.500h-3z" fill="#d43a3a"/><text x="44" y="429" class="d">WPS Office</text>
<rect x="82" y="424.500" width="4.500" height="5" fill="#e04040"/><text x="89" y="429" class="d">文档助手</text>
<rect x="128" y="424.500" width="5" height="5" fill="#dd3030"/><text x="136" y="429" class="d">Altium Designer 24安装教程</text><circle cx="197" cy="427" r="1.600" fill="none" stroke="#888" stroke-width=".5"/><text x="203" y="429" class="d">×</text>
<rect x="215" y="424.500" width="5" height="5" fill="#3560e0"/><text x="224" y="429" class="d">[1920x1] Altium Designer 24安装</text>
<!-- record bar -->
<polygon points="284,419 462,419 455,428 293,428" fill="#1d2630"/>
<rect x="296" y="422" width="3.500" height="3.500" fill="#556"/><path d="M306,425l1.500,-3l1.500,3z" fill="#6ab0e8"/><text x="313" y="426" class="w" style="font-size:5px;fill:#e4e8ea;font-weight:bold">1920x1080</text><text x="365" y="426" class="w" style="fill:#ccd">正在录制</text>
<circle cx="407" cy="424" r="2.500" fill="#e0101c"/><text x="411" y="426" class="w">暂停</text>
<rect x="424" y="421.500" width="5" height="4" fill="none" stroke="#ddd" stroke-width=".7"/><path d="M435,426l3,-3.500l1,1l-3,3z" fill="#4a9ae8"/><path d="M446,426l3,-3" stroke="#aaa" stroke-width=".7"/>
<!-- top right icons -->
<text x="639" y="428.500" style="font-size:6px;fill:#444;font-weight:bold">T1</text><circle cx="652" cy="426.500" r="2.200" fill="none" stroke="#777" stroke-width=".7"/><circle cx="664.500" cy="426.500" r="3.500" fill="#20205a"/><circle cx="664.500" cy="426" r="1.500" fill="#d0c8e8"/>
<path d="M677,427h3M691,424h3v4h-3z" stroke="#bbb" stroke-width=".6" fill="none"/>

<rect x="32" y="432" width="683" height="14" fill="#f5f7f5"/>
<rect x="38" y="437" width="4" height="4" fill="none" stroke="#666" stroke-width=".5"/><text x="44" y="441.500" class="d">文件</text>
<g fill="none" stroke="#777" stroke-width=".7"><rect x="62" y="437" width="4" height="5"/><path d="M72,441l3,-4M82,437h4v4h-4zM92,437h4v4h-4zM101,438a2,2 0 1 1 0,3M116,437l2,3l2,-3M125,441l1,-1l1,1"/></g>
<g class="d">
<text x="240" y="441">开始</text><text x="260" y="441">插入</text><text x="281" y="441">设计</text><text x="301" y="441">切换</text><text x="321" y="441">动画</text><text x="341" y="441">放映</text><text x="362" y="441">审阅</text><text x="383" y="441">视图</text><text x="403" y="441">工具</text><text x="423" y="441">会员专享</text>
<text x="457" y="441" style="fill:#d4661c">绘图工具</text><text x="487" y="441" style="fill:#d4661c">文本工具</text></g>
<rect x="487" y="443" width="18" height="1" fill="#d4661c"/>
<circle cx="520" cy="438.500" r="2" fill="none" stroke="#888" stroke-width=".7"/><path d="M521.500,440l1.500,1.500" stroke="#888"/>
<circle cx="684" cy="439" r="2.300" fill="none" stroke="#888" stroke-width=".6"/>
<rect x="692" y="435" width="10" height="8" rx="1" fill="#ee7a18"/>

<!-- ribbon -->
<rect x="36" y="446" width="666" height="26" rx="3" fill="#fff"/>
<rect x="32" y="472" width="670" height="2" fill="#e9ebe9"/>
<rect x="163" y="451" width="8" height="7" fill="none" stroke="#888" stroke-width=".6"/><text x="161" y="466" class="d">格式刷</text>
<rect x="183" y="450" width="44" height="8" fill="#f5f5f5" rx="1"/><text x="186" y="456.500" class="d">微软雅黑 (正文)</text>
<rect x="237" y="450" width="21" height="8" fill="#f5f5f5" rx="1"/><text x="240" y="456.500" class="d">16</text>
<g class="d" style="font-size:5.500px"><text x="264" y="456.500">A</text><text x="273" y="456.500">A</text><text x="283" y="456.500">◇</text>
<text x="186" y="466" style="font-weight:bold">B</text><text x="195" y="466">I</text><text x="203" y="466">U</text><text x="213" y="466">S</text><text x="223" y="466">S</text><text x="232" y="466">X²</text><text x="248" y="466">A</text><text x="263" y="466">A</text><text x="276" y="466">字</text></g>
<rect x="247" y="467" width="6" height="1.300" fill="#d01818"/><rect x="262" y="467" width="6" height="1.300" fill="#e8d820"/>
<path d="M292,447V470M518,447V470" stroke="#e4e6e4" stroke-width=".5"/>
<g fill="#888">
<rect x="297" y="452" width="5" height="4"/><rect x="307" y="452" width="5" height="4"/><rect x="318" y="453" width="4" height="2" fill="#ccc"/><rect x="327" y="453" width="4" height="2" fill="#88a"/><rect x="343" y="452" width="5" height="4"/><rect x="354" y="452" width="5" height="4"/><rect x="297" y="462" width="5" height="4"/><rect x="307" y="462" width="5" height="4"/><rect x="317" y="462" width="5" height="4"/><rect x="327" y="461" width="6" height="6" fill="#ddd"/><rect x="337" y="462" width="6" height="4"/><rect x="347" y="462" width="5" height="4" fill="#88a"/><rect x="357" y="462" width="5" height="4" fill="#88a"/><rect x="367" y="462" width="5" height="4" fill="#58a"/></g>
<rect x="381" y="452" width="5" height="4" fill="#aaa"/><text x="388" y="456" class="d">转智能图形</text>
<rect x="381" y="462" width="5" height="4" fill="#aaa"/><text x="388" y="466" class="d">对齐文本</text>
<path d="M417,449Q417,446 420,446H470Q472,446 472,449V470H417z" fill="#fff" stroke="#e8eae8" stroke-width=".5"/>
<text x="421" y="465" style="font-size:16px;font-weight:bold;fill:#111">A</text>
<text x="438" y="465" style="font-size:16px;font-weight:bold;fill:#3cb72e">A</text>
<text x="454" y="465" style="font-size:16px;font-weight:bold;fill:#d9f0cc;stroke:#5cc54e;stroke-width:.5">A</text>
<rect x="477" y="452" width="5" height="3" fill="#888"/><rect x="477" y="455" width="5" height="1.200" fill="#d01818"/><text x="484" y="456.500" class="d">填充</text>
<rect x="477" y="462" width="5" height="4" fill="#333"/><text x="484" y="466" class="d">轮廓</text>
<text x="505" y="457" style="font-size:8px;fill:#777">A</text><text x="501" y="466" class="d">效果</text>
<rect x="529" y="451" width="7" height="5" fill="#f5c0b0"/><text x="523" y="466" class="d">形状填充</text>
<rect x="549" y="451" width="5" height="4" fill="#999"/><text x="556" y="456" class="d">填充</text>
<rect x="549" y="461" width="5" height="4" fill="#5cbb50"/><text x="556" y="466" class="d">轮廓</text>
<circle cx="579" cy="454" r="3.500" fill="none" stroke="#888" stroke-width=".6"/><text x="573" y="466" class="d">效果</text>

<!-- left slide panel -->
<rect x="32" y="474" width="116" height="308" fill="#f4f6f3"/>
<rect x="33" y="474" width="1.200" height="308" fill="#dde0dc"/>
<text x="74" y="483" class="d" style="fill:#555">大纲</text><text x="87" y="483" class="d" style="fill:#d4661c">幻灯片</text>
<rect x="88" y="485" width="10" height="1" fill="#d4661c"/>
<path d="M138,479l-2,2l2,2" fill="none" stroke="#888" stroke-width=".7"/>
<!-- thumbs -->
<rect x="47" y="490" width="88" height="40" fill="#fff"/>
<rect x="82" y="493" width="44" height="28" fill="#3a3a3c"/><path d="M112,494h14v2h-14z" fill="#a03030"/><path d="M84,500h14M84,505h14M84,510h14M84,515h14" stroke="#888" stroke-width=".6"/>
<circle cx="118" cy="508" r="3" fill="#999"/><rect x="53" y="496" width="22" height="8" fill="#eee"/><rect x="53" y="505" width="22" height="3" fill="#ddd"/><rect x="53" y="513" width="26" height="8" fill="#ddd"/><rect x="49" y="525" width="72" height=".8" fill="#cdeab5"/><rect x="127" y="524" width="5" height="5" fill="#444"/>
<text x="40" y="541" class="d" style="fill:#666">11</text>
<rect x="47" y="536" width="88" height="48" fill="#fff"/>
<rect x="51" y="539" width="52" height="1" fill="#888"/><rect x="121" y="539" width="9" height="2" fill="#4cb040"/><rect x="51" y="543" width="82" height=".8" fill="#8ccb6a"/>
<g fill="#f6f6f6" stroke="#bbb" stroke-width=".4"><ellipse cx="93" cy="549" rx="8" ry="5"/><ellipse cx="93" cy="561" rx="10" ry="4"/><rect x="58" y="557" width="11" height="7"/><rect x="76" y="558" width="6" height="6"/><rect x="61" y="569" width="8" height="8"/><ellipse cx="91" cy="573" rx="9" ry="5"/></g>
<path d="M109,552h22M109,555h22M109,558h22M109,561h18M109,564h22" stroke="#ccc" stroke-width=".7"/><rect x="127" y="578" width="5" height="5" fill="#444"/><rect x="49" y="581" width="72" height=".8" fill="#cdeab5"/>
<text x="40" y="596" class="d" style="fill:#d4661c">12</text>
<rect x="47" y="589" width="89" height="51.500" fill="#fff" stroke="#e6a58a" stroke-width="1.200" rx="1.500"/>
<rect x="52" y="592" width="36" height="1" fill="#777"/><rect x="121" y="592" width="9" height="2" fill="#4cb040"/><rect x="50" y="595.500" width="82" height=".7" fill="#8ccb6a"/>
<rect x="54" y="598" width="16" height="14" fill="#6b6868"/><circle cx="62" cy="605" r="4" fill="none" stroke="#e30000" stroke-width="3"/>
<rect x="75" y="598" width="24" height="14" fill="#a00000"/><path d="M80,598v14M85,598v14M90,598v14" stroke="#200" stroke-width=".7"/>
<rect x="104" y="598" width="17" height="14" fill="#1f8a50"/><circle cx="112" cy="605" r="5" fill="none" stroke="#d4a06a" stroke-width="1.800"/>
<rect x="54" y="614" width="24" height="18" fill="#666"/><polygon points="54,624 60,615 66,624 66,632 54,632" fill="#f76f80"/><rect x="62" y="622" width="16" height="10" fill="#3a3a3a"/>
<rect x="82" y="614" width="16" height="18" fill="#555"/><rect x="86" y="616" width="10" height="13" fill="#e00" stroke="#60207a"/>
<rect x="104" y="614" width="25" height="18" fill="#4a4a4a"/><rect x="113" y="614" width="16" height="18" fill="#1e1e1e"/><path d="M118,620l3,-1l3,1l-3,2z" fill="#e00"/><rect x="106" y="622" width="5" height="5" fill="#f76f80"/>
<rect x="127" y="634" width="5" height="5" fill="#333"/>
<rect x="50" y="636" width="72" height=".7" fill="#cdeab5"/>
<text x="40" y="651" class="d" style="fill:#666">13</text>
<rect x="47" y="645" width="88" height="49" fill="#fff"/><rect x="51" y="648" width="38" height="1" fill="#888"/><rect x="121" y="648" width="9" height="2" fill="#4cb040"/><rect x="51" y="652" width="82" height=".8" fill="#8ccb6a"/>
<path d="M53,663h36M53,666h38M53,669h34M53,672h28M53,675h36" stroke="#bbb" stroke-width=".7"/>
<rect x="91" y="655" width="22" height="36" fill="#f0f0f0"/><rect x="103" y="659" width="10" height="20" fill="#bcd0e4"/>
<rect x="114" y="655" width="19" height="29" fill="#777"/><rect x="115" y="659" width="16" height="23" fill="#e6e020"/><rect x="118" y="661" width="10" height="7" fill="#e00"/><rect x="118" y="672" width="10" height="7" fill="#e00"/><rect x="117" y="668.500" width="12" height="3" fill="#888"/>
<rect x="103" y="679" width="10" height="8" fill="#200"/><rect x="106" y="681" width="4" height="4" fill="#e00"/><path d="M97,682l5,-5" stroke="#d02020"/>
<rect x="127" y="688" width="5" height="5" fill="#444"/><rect x="50" y="691" width="72" height=".8" fill="#cdeab5"/>
<text x="40" y="706" class="d" style="fill:#666">14</text>
<rect x="47" y="700" width="88" height="49" fill="#fff"/><rect x="51" y="703" width="38" height="1" fill="#888"/><rect x="121" y="703" width="9" height="2" fill="#4cb040"/><rect x="51" y="707" width="82" height=".8" fill="#8ccb6a"/>
<path d="M53,709h76M53,711h64M53,713h70M53,715h60M53,717h76M53,719h70" stroke="#bbb" stroke-width=".6"/>
<rect x="52" y="724" width="20" height="21" fill="#e8eef4"/><rect x="72" y="724" width="20" height="21" fill="#f4f4f4"/><rect x="72" y="723" width="20" height="3" fill="#ccd"/><rect x="92" y="724" width="20" height="21" fill="#e8eef4"/><rect x="112" y="724" width="16" height="20" fill="#f0f0f0"/><rect x="67" y="724" width="5" height="3" fill="#333"/><rect x="90" y="724" width="5" height="3" fill="#333"/>
<path d="M58,730l4,5M82,730l3,5" stroke="#d84040"/>
<rect x="127" y="743" width="5" height="5" fill="#444"/><rect x="50" y="746" width="72" height=".8" fill="#cdeab5"/>
<text x="40" y="761" class="d" style="fill:#666">15</text>
<rect x="47" y="755" width="88" height="9.500" fill="#fff"/><rect x="51" y="758" width="38" height="1" fill="#888"/><rect x="121" y="758" width="9" height="2" fill="#4cb040"/><rect x="51" y="761.500" width="82" height=".8" fill="#8ccb6a"/>
<text x="85" y="774" style="font-size:9px;fill:#444;font-weight:bold">+</text>
<rect x="142" y="582" width="2" height="18" fill="#ccc"/>

<!-- work area -->
<rect x="148" y="474" width="554" height="308" fill="url(#gr)"/>
<rect x="153" y="489" width="490" height="275" fill="#eaeceb" opacity=".6"/>
<rect x="155" y="490" width="487" height="273.500" fill="#fff"/>
<text x="177" y="521" style="font-size:12.400px;fill:#1d1d1d;stroke:#1d1d1d;stroke-width:.2px">第48讲 异形焊盘PCB封装创建方法</text>
<rect x="174" y="528.500" width="450" height="1" fill="#8ccb6a"/>
<polygon points="560,512 572,507 577,509 566,513 566,525 560,521" fill="#5cb83a"/><polygon points="568,516 577,513 577,521 571,525 568,525 574,519 568,519" fill="#5cb83a"/>
<text x="583" y="518" style="font-size:10px;font-weight:bold;fill:#444">凡亿教育</text>
<text x="583" y="523" style="font-size:3.500px;fill:#888">电子工程师教育平台</text>

<!-- image 1 -->
<rect x="189" y="534" width="91" height="79.500" fill="#6b6868"/>
<path d="M253,550A28,28 0 1 0 253,595" fill="none" stroke="#e90000" stroke-width="17" stroke-linecap="round"/>
<circle cx="233" cy="573" r="9" fill="#f00000" stroke="#6b1a90" stroke-width="1.200"/>
<path d="M262,560L276,587L286,545" fill="none" stroke="#d21414" stroke-width="1.300"/>
<!-- image 2 -->
<rect x="307" y="534" width="132" height="79.500" fill="#0c0606"/>
<use href="#tp" x="315"/><use href="#tp" x="342.700"/><use href="#tp" x="370.700"/><use href="#tp" x="398.300"/><use href="#tp" x="426"/>
<use href="#bp" x="329"/><use href="#bp" x="356.700"/><use href="#bp" x="385"/><use href="#bp" x="412.300"/>
<polygon points="432,577 437,567 439,567 439,609 432,609" fill="#f40000"/>
<rect x="308" y="578" width="4" height="31" fill="#f40000"/>
<circle cx="334" cy="552" r="6.500" fill="#c88222" opacity=".65"/><path d="M335,553l5,5" stroke="#fff" stroke-width="1.800"/>
<path d="M432,592L437,609L450,565L465,541" fill="none" stroke="#d21414" stroke-width="1.100"/>
<!-- image 3 -->
<rect x="469" y="535" width="98" height="78.500" fill="#1f8a52"/>
<path d="M485,546A38,38 0 1 0 552,546" fill="none" stroke="#cf9a64" stroke-width="13"/>
<path d="M493,552A32,32 0 1 0 544,552" fill="none" stroke="#e6c094" stroke-width="1"/>
<path d="M474,573h6M478,590l5,-3M493,604l2,-6M518,610v-6M542,604l-2,-6M558,590l-5,-3M563,573h-6M559,555l-5,2" stroke="#8a5a30" stroke-width="1.200"/>
<rect x="513" y="556" width="14" height="5" fill="#ddd"/><rect x="511" y="581" width="13" height="5" fill="#ddd"/>
<circle cx="517" cy="572" r="7" fill="#111"/><circle cx="516" cy="591" r="2.500" fill="#e8e8e8"/><circle cx="498" cy="558" r="2.500" fill="#d0e8d8"/>
<rect x="472" y="537" width="4" height="3" fill="#ddd"/><rect x="560" y="537" width="4" height="3" fill="#ddd"/><rect x="472" y="603" width="5" height="5" fill="#ddd"/><rect x="558" y="603" width="6" height="5" fill="#ddd"/>
<path d="M522,572L550,611L566,571L600,533" fill="none" stroke="#d20c0c" stroke-width="1.200"/>

<!-- image 4 -->
<rect x="189" y="620" width="128" height="99.500" fill="#605e5e"/>
<rect x="189" y="620" width="128" height="99.500" fill="url(#grid)"/>
<polygon points="190,648 216,621 222,621 251,652 251,720 218,720 205,705 190,705" fill="#fa6e80"/>
<rect x="228" y="651" width="43" height="68.500" fill="#2c2c2e"/>
<rect x="271" y="668" width="46" height="35" fill="#333335"/>
<rect x="229" y="669" width="42" height="5" fill="#5b84a8"/>
<rect x="271" y="674.500" width="46" height="5" fill="#5b84a8"/>
<g fill="#d6d6d6" style="font-size:3.500px"><text x="234" y="656">Unions从选中</text><text x="234" y="660.500">创建联合(U)</text><text x="234" y="666">查找(F)</text><text x="234" y="673">焊盘操作</text><text x="234" y="678">复制(D)</text><text x="234" y="682.500">工具(T)</text><text x="234" y="688">选择(S)</text><text x="234" y="696">复制(C)</text><text x="234" y="700.500">粘贴(P)</text><text x="234" y="705">删除(D)</text><text x="234" y="712">对齐方式(A)</text><text x="234" y="718">属性(P)...</text>
<text x="274" y="673">从焊盘创建填充</text><text x="274" y="678.500">将选定填充转换为异形焊盘</text><text x="274" y="684">从焊盘创建多边形</text><text x="274" y="689">从多边形创建填充</text><text x="274" y="695">从选定对象创建</text><text x="274" y="701">转换</text></g>
<path d="M310,649L309,671" stroke="#d20c0c" stroke-width="1.300"/><path d="M307,668l2,4l2,-4z" fill="#d20c0c"/>
<text x="203" y="738.500" class="c" style="font-size:7.800px">1、填充转换成异形焊盘</text>
<!-- image 5 -->
<rect x="349" y="620" width="87" height="99.500" fill="#6a6868"/>
<rect x="349" y="620" width="87" height="99.500" fill="url(#grid)"/>
<polygon points="369,625 431,625 431,712 382,712 382,676 369,676" fill="#f00000"/>
<path d="M371,627H429V710H384V674H371Z" fill="none" stroke="#7b0a7b" stroke-width="4"/>
<text x="396" y="655" style="font-size:11px;fill:#f0c0c0">2</text>
<text transform="translate(401,676) rotate(90)" style="font-size:9px;fill:#f4dada">3</text>
<text x="349" y="738.500" class="c" style="font-size:7.800px">2、标准焊盘叠加处理</text>
<!-- image 6 -->
<rect x="469" y="620" width="142" height="100.500" fill="#2a2a2a"/>
<rect x="469" y="620" width="54" height="100.500" fill="#605e5e"/>
<rect x="469" y="620" width="54" height="100.500" fill="url(#grid)"/>
<rect x="525" y="627" width="85" height="51.500" fill="#111"/>
<text x="527" y="626" style="font-size:3.500px;fill:#bbb">Properties</text><text x="527" y="632" style="font-size:3.500px;fill:#6a8aa8">Pad Stack</text>
<polygon points="553,653 567,647 581,653 567,661" fill="#e50000"/>
<rect x="474" y="666" width="24" height="29" fill="#fa6e80" stroke="#b89fcc" stroke-width="1.200"/>
<text transform="translate(482,676) rotate(90)" style="font-size:7px;fill:#fff">3</text>
<rect x="526" y="680" width="27" height="4.500" fill="#5b84a8"/><rect x="556" y="680" width="24" height="4.500" fill="#444"/><rect x="588" y="680" width="20" height="4.500" fill="#444"/>
<circle cx="585" cy="682" r="2.500" fill="#eee"/>
<path d="M526,690h84M526,695h84M526,700h84M526,705h84M526,710h84" stroke="#444" stroke-width=".6"/>
<rect x="526" y="690" width="1" height="5" fill="#d01818"/><rect x="526" y="705" width="1" height="5" fill="#7b0a7b"/>
<rect x="530" y="691" width="24" height="3" fill="#3a3a3a"/><rect x="560" y="691" width="18" height="3" fill="#3a3a3a"/><rect x="530" y="701" width="24" height="3" fill="#3a3a3a"/><rect x="530" y="706" width="24" height="3" fill="#3a3a3a"/>
<rect x="581" y="713" width="26" height="4" fill="#5b84a8"/>
<path d="M568,703L580,712" stroke="#d20c0c" stroke-width="1.200"/><path d="M576,711l5,2l-2,-4z" fill="#d20c0c"/>
<text x="525" y="718" style="font-size:3.500px;fill:#bbb">Pad Stack</text>
<circle cx="537" cy="716" r="2" fill="none" stroke="#eee"/>
<text x="498" y="738.500" class="c" style="font-size:7.800px">3、自定义标准焊盘</text>
<rect x="499.500" y="726" width="74" height="16" fill="none" stroke="#999" stroke-width=".5" stroke-dasharray="1 1"/>
<g fill="#fff" stroke="#777" stroke-width=".5"><circle cx="500" cy="726" r="1.800"/><circle cx="536" cy="726" r="1.800"/><circle cx="574" cy="726" r="1.800"/><circle cx="500" cy="742" r="1.800"/><circle cx="536" cy="742" r="1.800"/><circle cx="574" cy="742" r="1.800"/><circle cx="574" cy="734" r="1.800"/></g>
<path d="M536,718V725" stroke="#777" stroke-width=".5"/>
<!-- floating tool icons -->
<g fill="#fff" stroke="#ddd" stroke-width=".5"><rect x="580" y="688" width="9.500" height="9.500" rx="1"/><rect x="580" y="701" width="9.500" height="9.500" rx="1"/><rect x="580" y="714" width="9.500" height="9.500" rx="1"/><rect x="580" y="727" width="9.500" height="9.500" rx="1"/><rect x="580" y="740" width="9.500" height="9.500" rx="1"/><rect x="580" y="753" width="9.500" height="9.500" rx="1"/></g>
<circle cx="585" cy="693" r="2.500" fill="none" stroke="#778"/><path d="M583,708l4,-5" stroke="#68a" stroke-width="1.500"/><circle cx="585" cy="717.500" r="1.200" fill="#777"/><rect x="582" y="720" width="6" height="1.500" fill="#4cb040"/><rect x="582.500" y="729.500" width="5" height="4" fill="none" stroke="#444"/><rect x="582" y="733.500" width="6" height="1.200" fill="#4cb040"/><path d="M582,742l5,5M587,742l-5,5" stroke="#666" stroke-width=".7"/><text x="582.500" y="759" style="font-size:5px;fill:#777">···</text>
<!-- QR -->
<rect x="593" y="731" width="30" height="29.500" fill="url(#qr)"/>
<path d="M593,731h8v8h-8zM615,731h8v8h-8zM593,752h8v8h-8z" fill="#111"/>
<path d="M594,732h6v6h-6zM616,732h6v6h-6zM594,753h6v6h-6z" fill="#fff"/>
<path d="M595.500,733.500h3v3h-3zM617.500,733.500h3v3h-3zM595.500,754.500h3v3h-3z" fill="#111"/>
<rect x="604" y="741" width="8" height="9" fill="#eee"/><rect x="606" y="743" width="4" height="7" fill="#443a3a"/>
<!-- footer -->
<rect x="174" y="747" width="406" height="1.500" fill="#cde8bc"/>
<text x="174" y="759" class="g">电子设计一站式学习平台 www.fanyedu.com</text>
<text x="491" y="759" style="font-size:5.600px;fill:#c4c4c4">凡亿教育官网上搜索获取更多精彩课程</text>

<!-- h-scroll, notes -->
<rect x="150" y="765" width="550" height="3" fill="#f0f2f0"/><rect x="155" y="765" width="464" height="2.500" fill="#c8c8c8"/>
<rect x="148" y="768" width="554" height="14" fill="#f6f8f5"/>
<text x="151" y="777.500" class="d" style="fill:#666">单击此处添加备注</text>
<!-- vertical scroll right -->
<rect x="690" y="570" width="2.500" height="16" fill="#ccc"/>
<!-- side icons -->
<rect x="702" y="560" width="6" height="6" fill="none" stroke="#888" stroke-width=".7"/>
<circle cx="705" cy="578" r="3" fill="none" stroke="#888" stroke-width=".7"/>
<!-- watermarks -->
<g style="font-size:6px;fill:#e6e9e6" transform="rotate(-30 660 540)"><text x="640" y="540">凡亿教育</text></g>
<g style="font-size:6px;fill:#e6e9e6" transform="rotate(-30 660 610)"><text x="650" y="625">凡亿教育</text></g>
<g style="font-size:6px;fill:#e6eae2" transform="rotate(-30 660 700)"><text x="655" y="690">凡亿教育</text></g>
<!-- drawing toolbar -->
<rect x="702" y="419" width="13" height="134" fill="#121214"/>
<rect x="702.500" y="441.500" width="9" height="9" fill="#2f8fe8"/>
<g fill="none" stroke="#f0f0f0" stroke-width="1">
<path d="M708,422l3,3" stroke="#777"/><path d="M705,431v7l2,-2l2,2l1,-1l-2,-2l2,-1z" fill="#eee"/><path d="M704,449l6,-6" stroke="#fff" stroke-width="1.500"/><path d="M704,458l3,-3l3,-3M707,454l2,-2" stroke-width="1.500"/><path d="M704,468l6,-6"/><path d="M704,478l6,-6" stroke-width="1.400"/><path d="M704,482h7v7M704,482v2"/><path d="M704,495l2,-3l4,1l0,3l-4,2z" fill="#ddd" stroke="none"/>
<path d="M704,500h7M707.500,500v8"/><path d="M704,515l4,-4l3,3l-4,3z" fill="#eee"/></g>
<path d="M702,520H715" stroke="#444" stroke-width=".5"/>
<rect x="704" y="524" width="7" height="6" fill="#e81010"/>
<rect x="703.500" y="536" width="8" height="1.800" fill="#fff"/>
<path d="M702,541H715" stroke="#444" stroke-width=".5"/>
<circle cx="705" cy="548" r="1" fill="#fff"/><circle cx="710" cy="548" r="1" fill="#fff"/>
<rect x="702" y="553" width="13" height="1" fill="#333"/>
<!-- side tab -->
<rect x="695" y="590" width="20" height="43" fill="#454545" rx="1"/>
<path d="M708,604l-5,7l5,7" fill="none" stroke="#f0f0f0" stroke-width="1.100"/>
<text x="704" y="596" style="font-size:4px;fill:#888">记录</text>

<!-- status bar -->
<rect x="32" y="782" width="683" height="8" fill="#f0f3ef"/>
<text x="36" y="787.500" class="d" style="fill:#555;font-size:4.800px">幻灯片 15 / 104</text>
<path d="M70,781v7" stroke="#ccc" stroke-width=".5"/>
<rect x="76" y="783" width="4" height="4" fill="#888"/><text x="82" y="787.500" class="d" style="fill:#555;font-size:4.800px">缺失字体的幻灯片</text>
<path d="M124,787l2,-3.500l2,3.500z" fill="#e8b820"/><text x="130" y="787.500" class="d" style="fill:#555;font-size:4.800px">备份中</text>
<g class="d" style="fill:#555;font-size:4.800px"><rect x="467" y="783" width="4" height="4" fill="#888"/><text x="473" y="787.500">智能美化</text><rect x="505" y="783" width="4" height="4" fill="#888"/><text x="511" y="787.500">备注</text><text x="532" y="787.500">批注</text></g>
<rect x="557" y="783" width="6" height="5" fill="#bbb"/><rect x="568" y="783" width="6" height="5" fill="none" stroke="#999" stroke-width=".5"/><rect x="580" y="783" width="5" height="5" fill="none" stroke="#999" stroke-width=".5"/>
<rect x="593" y="782" width="8" height="7" fill="#ee7a18"/><path d="M596,783.500l3,2l-3,2z" fill="#fff"/>
<path d="M616,788l4,-5" stroke="#555" stroke-width=".6"/>
<text x="628" y="787.500" class="d" style="fill:#555;font-size:4.800px">100%</text>
<rect x="650" y="785" width="4" height=".8" fill="#555"/><rect x="661" y="785" width="39" height=".7" fill="#aaa"/><rect x="661" y="785" width="19" height="1" fill="#4068a8"/><rect x="679" y="784" width="1" height="3" fill="#444"/>
<path d="M704,785.500h4M706,783.500v4" stroke="#555" stroke-width=".7"/>
<!-- taskbar bottom -->
<rect x="32" y="790" width="683" height="12" fill="#131313"/>
<defs><linearGradient id="tb" x1="0" x2="1"><stop offset=".8" stop-color="#131313" stop-opacity="0"/><stop offset="1" stop-color="#2a5030"/></linearGradient></defs>
<rect x="32" y="790" width="683" height="12" fill="url(#tb)"/>
<rect x="32" y="802" width="683" height="2.500" fill="#0a9cf5"/>
<path d="M37,794h2.500v2.500h-2.500zM40.500,794h2.500v2.500h-2.500zM37,797.500h2.500v2.500h-2.500zM40.500,797.500h2.500v2.500h-2.500z" fill="#fff"/>
<circle cx="58" cy="795.500" r="2" fill="none" stroke="#ddd" stroke-width=".7"/><path d="M56.500,797l-2,3" stroke="#ddd" stroke-width=".7"/>
<path d="M72,795h5M72,797h5M72,799h5" stroke="#ddd" stroke-width=".6"/>
<circle cx="92" cy="797" r="3.800" fill="#e07820"/><circle cx="92" cy="797" r="1.500" fill="#fff"/>
<path d="M106,794l1.500,5l1.500,-4l1.500,4l1.500,-5" fill="none" stroke="#d01818" stroke-width="1.100"/>
<path d="M127,793q3,2 1,4q-3,2 -.5,4" fill="none" stroke="#c9a23a" stroke-width="1.200"/>
<rect x="140" y="794" width="8" height="6" fill="#e8c040"/><rect x="140" y="797" width="8" height="3" fill="#4aa8e0"/>
<g fill="#ddd"><path d="M608,798l2,-2l2,2" fill="none" stroke="#ccc" stroke-width=".6"/><rect x="617" y="793.500" width="3" height="5"/><circle cx="627" cy="797" r="2" fill="#3a9ae0"/><circle cx="636" cy="797" r="2" fill="#e88"/><rect x="643" y="795" width="5" height="4"/><rect x="651" y="795" width="4" height="4"/></g>
<text x="660" y="799" class="w" style="font-size:4.300px">ENG</text>
<text x="677" y="795" class="w" style="font-size:4.400px">1:01</text><text x="673" y="801" class="w" style="font-size:4.400px">2024/01/26</text>
<circle cx="693" cy="801" r="3.500" fill="#0a8ae0"/>
<rect x="700" y="794" width="6.500" height="6" fill="#e8e8e8"/>
</svg>
</body></html>
